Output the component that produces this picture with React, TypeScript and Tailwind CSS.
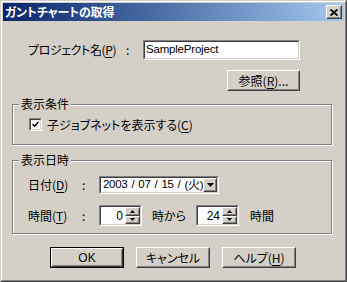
import React from "react";

function Raised({ className = "", children, isDefault = false }: { className?: string; children?: React.ReactNode; isDefault?: boolean }) {
  const inner = (
    <div className="h-full w-full border border-t-white border-l-white border-r-[#404040] border-b-[#404040]">
      <div className="h-full w-full border border-t-[#d4d0c8] border-l-[#d4d0c8] border-r-[#808080] border-b-[#808080] flex items-center justify-center">
        {children}
      </div>
    </div>
  );
  if (isDefault) {
    return <div className={`border border-black bg-[#d4d0c8] ${className}`}>{inner}</div>;
  }
  return <div className={`bg-[#d4d0c8] ${className}`}>{inner}</div>;
}

function Sunken({ className = "", children }: { className?: string; children?: React.ReactNode }) {
  return (
    <div className={`border border-t-[#808080] border-l-[#808080] border-r-white border-b-white ${className}`}>
      <div className="h-full w-full border border-t-[#404040] border-l-[#404040] border-r-[#d4d0c8] border-b-[#d4d0c8] bg-white flex items-center">
        {children}
      </div>
    </div>
  );
}

function U({ children }: { children: React.ReactNode }) {
  return <span className="underline underline-offset-[2px] decoration-1">{children}</span>;
}

function SpinBox({ value }: { value: string }) {
  return (
    <Sunken className="w-[43px] h-[21px]">
      <div className="flex-1 text-right pr-[2px] font-['Liberation_Sans',sans-serif] text-[12px]">{value}</div>
      <div className="flex flex-col w-[15px] h-full">
        <Raised className="h-1/2 w-full">
          <svg width="5" height="3" viewBox="0 0 5 3"><path d="M2.5 0 L5 3 L0 3 Z" fill="black" /></svg>
        </Raised>
        <Raised className="h-1/2 w-full">
          <svg width="5" height="3" viewBox="0 0 5 3"><path d="M0 0 L5 0 L2.5 3 Z" fill="black" /></svg>
        </Raised>
      </div>
    </Sunken>
  );
}

function Slash() {
  return <span className="mx-[4px]">/</span>;
}

export default function App() {
  return (
    <div className="w-[347px] h-[282px] bg-[#d4d0c8] border border-t-[#d4d0c8] border-l-[#d4d0c8] border-r-[#404040] border-b-[#404040] font-['Noto_Sans_CJK_JP',sans-serif] text-[12px] text-black leading-none [font-feature-settings:'palt']">
      <div className="h-full border border-t-white border-l-white border-r-[#808080] border-b-[#808080] p-px flex flex-col">
        {/* Title bar */}
        <div className="h-[18px] shrink-0 flex items-center justify-between bg-gradient-to-r from-[#0a246a] to-[#a6caf0] pl-[2px] pr-[2px]">
          <span className="text-white font-bold text-[12px] tracking-[-0.2px]">ガントチャートの取得</span>
          <Raised className="w-[16px] h-[14px]">
            <svg width="8" height="7" viewBox="0 0 8 7">
              <path d="M0.5 0.5 L7.5 6.5 M7.5 0.5 L0.5 6.5" stroke="black" strokeWidth="1.8" />
            </svg>
          </Raised>
        </div>

        {/* Body */}
        <div className="flex flex-col flex-1">
          {/* Project row */}
          <div className="mt-[19px] flex items-center h-[20px] pl-[25px]">
            <span className="w-[98px] tracking-[-0.4px]">プロジェクト名(<U>P</U>)</span>
            <span className="w-[17px]">:</span>
            <Sunken className="w-[157px] h-[20px]">
              <span className="pl-[1px] font-['Liberation_Sans',sans-serif] text-[11.5px] tracking-[-0.2px]">SampleProject</span>
            </Sunken>
          </div>

          {/* Browse button */}
          <div className="mt-[10px] pl-[224px]">
            <Raised className="w-[73px] h-[21px]">
              <span>参照(<U>R</U>)...</span>
            </Raised>
          </div>

          {/* Group 1 */}
          <div className="mt-[13px] ml-[9px] relative w-[320px] h-[41px] border border-[#808080] [box-shadow:inset_1px_1px_0_#fff,1px_1px_0_#fff]">
            <span className="absolute left-[6px] top-[-7px] px-[2px] bg-[#d4d0c8]">表示条件</span>
            <div className="mt-[13px] ml-[16px] flex items-center gap-[5px]">
              <Sunken className="w-[13px] h-[13px]">
                <svg width="11" height="11" viewBox="0 0 11 11" className="block">
                  <path d="M2 5 L4.3 7.5 L9 2.5" stroke="black" strokeWidth="1.8" fill="none" />
                </svg>
              </Sunken>
              <span>子ジョブネットを表示する(<U>C</U>)</span>
            </div>
          </div>

          {/* Group 2 */}
          <div className="mt-[15px] ml-[9px] relative w-[320px] h-[74px] border border-[#808080] [box-shadow:inset_1px_1px_0_#fff,1px_1px_0_#fff]">
            <span className="absolute left-[6px] top-[-7px] px-[2px] bg-[#d4d0c8]">表示日時</span>
            <div className="mt-[15px] ml-[15px] flex items-center h-[18px]">
              <span className="w-[54px]">日付(<U>D</U>)</span>
              <span className="w-[17px]">:</span>
              <Sunken className="w-[120px] h-[18px]">
                <span className="flex-1 pl-[2px] font-['Liberation_Sans',sans-serif] text-[11.5px] tracking-[-0.3px] whitespace-nowrap flex items-center">
                  <span>2003</span><Slash /><span>07</span><Slash /><span>15</span><Slash />
                  <span>(<span className="font-['Noto_Sans_CJK_JP',sans-serif] text-[12px]">火</span>)</span>
                </span>
                <Raised className="w-[16px] h-full">
                  <svg width="7" height="4" viewBox="0 0 7 4"><path d="M0 0 L7 0 L3.5 4 Z" fill="black" /></svg>
                </Raised>
              </Sunken>
            </div>
            <div className="mt-[11px] ml-[15px] flex items-center h-[21px]">
              <span className="w-[54px]">時間(<U>T</U>)</span>
              <span className="w-[17px]">:</span>
              <SpinBox value="0" />
              <span className="ml-[10px] w-[44px]">時から</span>
              <SpinBox value="24" />
              <span className="ml-[11px]">時間</span>
            </div>
          </div>

          {/* Buttons */}
          <div className="mt-[13px] ml-[47px] flex gap-[12px]">
            <Raised isDefault className="w-[74px] h-[21px]"><span className="font-['Liberation_Sans',sans-serif]">OK</span></Raised>
            <Raised className="w-[74px] h-[21px]"><span>キャンセル</span></Raised>
            <Raised className="w-[74px] h-[21px]"><span>ヘルプ(<U>H</U>)</span></Raised>
          </div>
        </div>
      </div>
    </div>
  );
}
